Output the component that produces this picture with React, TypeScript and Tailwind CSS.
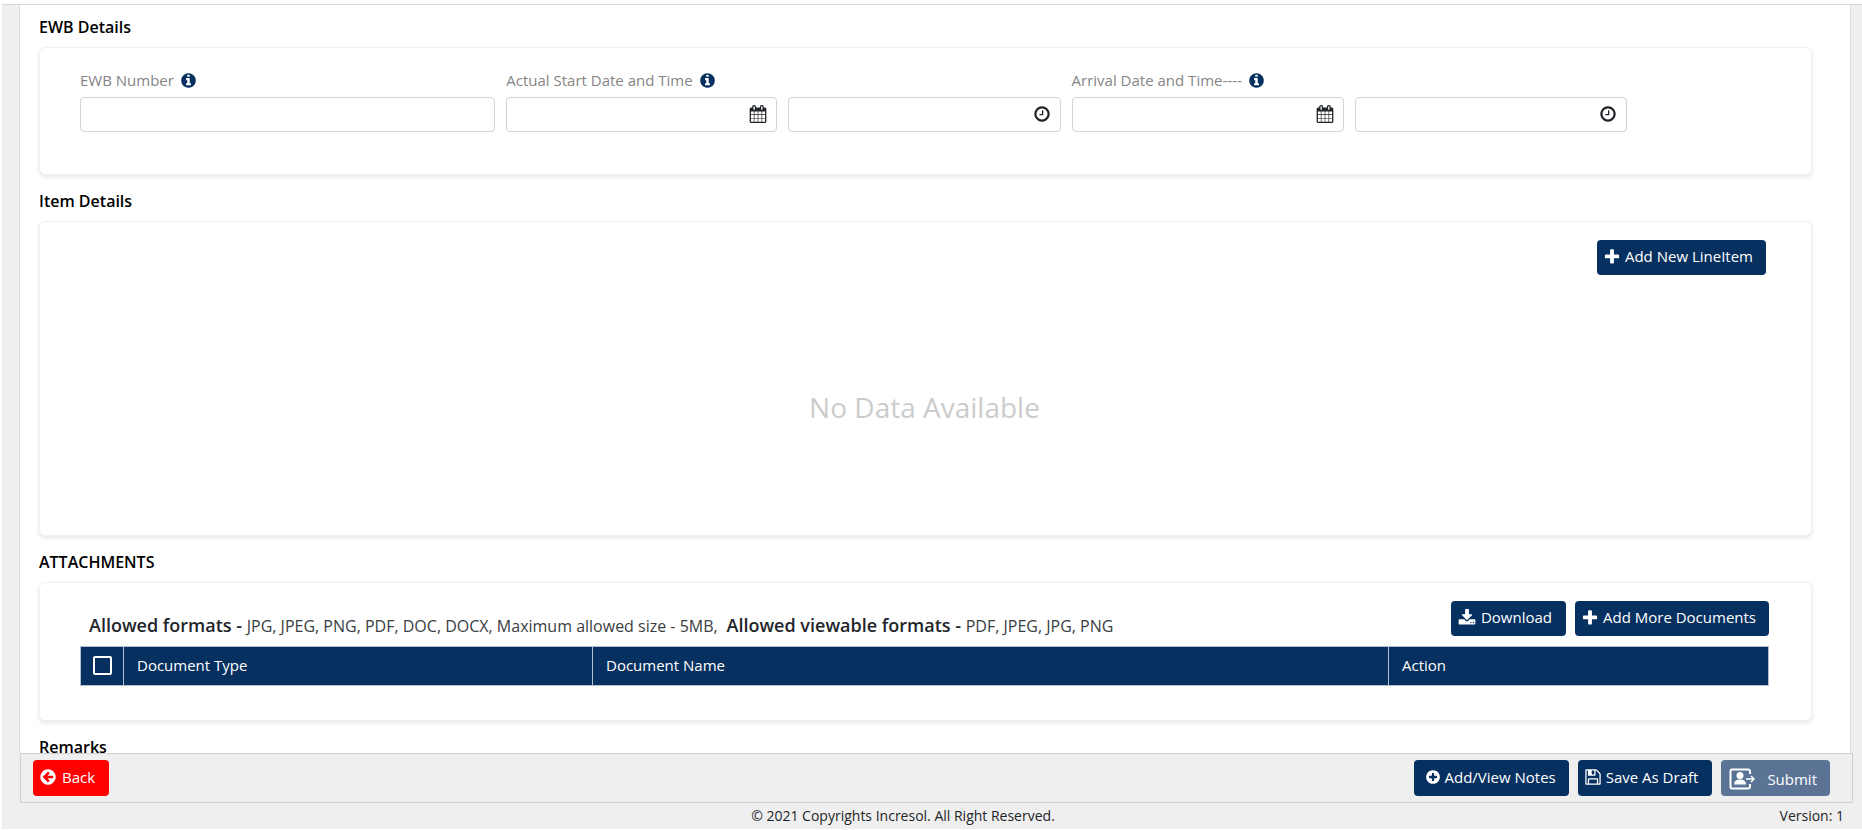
import type { ReactNode } from "react";

const DISC =
  "M1664 896q0 209-103 385.5t-279.5 279.5-385.5 103-385.5-103-279.5-279.5-103-385.5 103-385.5 279.5-279.5 385.5-103 385.5 103 279.5 279.5 103 385.5z";

const ICONS = {
  plus: "M1600 736v192q0 40-28 68t-68 28h-416v416q0 40-28 68t-68 28h-192q-40 0-68-28t-28-68v-416h-416q-40 0-68-28t-28-68v-192q0-40 28-68t68-28h416v-416q0-40 28-68t68-28h192q40 0 68 28t28 68v416h416q40 0 68 28t28 68z",
  info:
    "M1152 1376v-160q0-14-9-23t-23-9h-96v-512q0-14-9-23t-23-9h-320q-14 0-23 9t-9 23v160q0 14 9 23t23 9h96v320h-96q-14 0-23 9t-9 23v160q0 14 9 23t23 9h448q14 0 23-9t9-23zm-128-896v-160q0-14-9-23t-23-9h-192q-14 0-23 9t-9 23v160q0 14 9 23t23 9h192q14 0 23-9t9-23z" +
    DISC,
  calendar:
    "M192 1664h288v-288h-288v288zm352 0h320v-288h-320v288zm-352-352h288v-320h-288v320zm352 0h320v-320h-320v320zm-352-384h288v-288h-288v288zm736 736h320v-288h-320v288zm-384-736h320v-288h-320v288zm768 736h288v-288h-288v288zm-384-352h320v-320h-320v320zm-352-864v-288q0-13-9.5-22.5t-22.5-9.5h-64q-13 0-22.5 9.5t-9.5 22.5v288q0 13 9.5 22.5t22.5 9.5h64q13 0 22.5-9.5t9.5-22.5zm736 864h288v-320h-288v320zm-384-384h320v-288h-320v288zm384 0h288v-288h-288v288zm32-480v-288q0-13-9.5-22.5t-22.5-9.5h-64q-13 0-22.5 9.5t-9.5 22.5v288q0 13 9.5 22.5t22.5 9.5h64q13 0 22.5-9.5t9.5-22.5zm384-64v1280q0 52-38 90t-90 38h-1408q-52 0-90-38t-38-90v-1280q0-52 38-90t90-38h128v-96q0-66 47-113t113-47h64q66 0 113 47t47 113v96h384v-96q0-66 47-113t113-47h64q66 0 113 47t47 113v96h128q52 0 90 38t38 90z",
  clock:
    "M1024 544v448q0 14-9 23t-23 9h-320q-14 0-23-9t-9-23v-64q0-14 9-23t23-9h224v-352q0-14 9-23t23-9h64q14 0 23 9t9 23zm416 352q0-148-73-273t-198-198-273-73-273 73-198 198-73 273 73 273 198 198 273 73 273-73 198-198 73-273z" +
    DISC,
  download:
    "M1344 1344q0-26-19-45t-45-19-45 19-19 45 19 45 45 19 45-19 19-45zm256 0q0-26-19-45t-45-19-45 19-19 45 19 45 45 19 45-19 19-45zm128-224v320q0 40-28 68t-68 28h-1472q-40 0-68-28t-28-68v-320q0-40 28-68t68-28h465l135 136q58 56 136 56t136-56l136-136h464q40 0 68 28t28 68zm-325-569q17 41-14 70l-448 448q-18 19-45 19t-45-19l-448-448q-31-29-14-70 17-39 59-39h256v-448q0-26 19-45t45-19h256q26 0 45 19t19 45v448h256q42 0 59 39z",
  save: "M512 1536h768v-384h-768v384zm896 0h128v-896q0-14-10-38.5t-20-34.5l-281-281q-10-10-34-20t-39-10v416q0 40-28 68t-68 28h-576q-40 0-68-28t-28-68v-416h-128v1280h128v-416q0-40 28-68t68-28h832q40 0 68 28t28 68v416zm-384-928v-320q0-13-9.5-22.5t-22.5-9.5h-192q-13 0-22.5 9.5t-9.5 22.5v320q0 13 9.5 22.5t22.5 9.5h192q13 0 22.5-9.5t9.5-22.5zm640 32v928q0 40-28 68t-68 28h-1344q-40 0-68-28t-28-68v-1344q0-40 28-68t68-28h928q40 0 88 20t76 48l280 280q28 28 48 76t20 88z",
  plusCircle:
    "M1344 960v-128q0-26-19-45t-45-19h-256v-256q0-26-19-45t-45-19h-128q-26 0-45 19t-19 45v256h-256q-26 0-45 19t-19 45v128q0 26 19 45t45 19h256v256q0 26 19 45t45 19h128q26 0 45-19t19-45v-256h256q26 0 45-19t19-45z" +
    DISC,
  back:
    "M1408 960v-128q0-26-19-45t-45-19h-502l189-189q19-19 19-45t-19-45l-91-91q-18-18-45-18t-45 18l-362 362-91 91q-18 18-18 45t18 45l91 91 362 362q18 18 45 18t45-18l91-91q18-18 18-45t-18-45l-189-189h502q26 0 45-19t19-45z" +
    DISC,
};

function Icon({ name, className }: { name: keyof typeof ICONS; className: string }) {
  return (
    <svg viewBox="0 0 1792 1792" className={className} fill="currentColor" fillRule="evenodd" aria-hidden="true">
      <path d={ICONS[name]} />
    </svg>
  );
}

function SubmitIcon() {
  return (
    <svg viewBox="0 0 26 22" className="h-[22px] w-[26px] shrink-0" fill="none" aria-hidden="true">
      <path d="M21 6V3.500Q21 1.500 19 1.500H3Q1.500 1.500 1.500 3V19Q1.500 20.500 3 20.500H19Q21 20.500 21 18.500V16" stroke="currentColor" strokeWidth="2" />
      <circle cx="11" cy="7.500" r="3.500" fill="currentColor" />
      <path d="M5 16.500Q5 11.500 11 11.500Q17 11.500 17 16.500Z" fill="currentColor" />
      <path d="M17 11H24M22 8L25 11L22 14" stroke="currentColor" strokeWidth="1.500" />
    </svg>
  );
}

function Section({ title, className, children }: { title: string; className: string; children: ReactNode }) {
  return (
    <section>
      <h2 className="flex h-[46px] items-center pt-[6px] text-base font-semibold text-black">{title}</h2>
      <div className={"rounded-md border border-[#f0f0f0] bg-white pl-10 pr-[42px] shadow-[0_2px_4px_rgba(0,0,0,0.1)] " + className}>
        {children}
      </div>
    </section>
  );
}

function FieldLabel({ htmlFor, children }: { htmlFor: string; children: ReactNode }) {
  return (
    <label htmlFor={htmlFor} className="flex h-[22px] items-center gap-[6px] whitespace-nowrap text-[15px] text-[#858585]">
      {children}
      <Icon name="info" className="h-[17px] w-[17px] text-[#06305f]" />
    </label>
  );
}

function IconInput({ id, label, icon }: { id: string; label?: string; icon: "calendar" | "clock" }) {
  return (
    <div className="relative">
      <input
        id={id}
        type="text"
        aria-label={label}
        className="block h-[35px] w-full rounded border border-[#ced4da] bg-white pl-3 pr-10 text-[15px] outline-none"
      />
      <Icon name={icon} className="absolute right-[10px] top-2 h-[18px] w-[18px] text-[#212529]" />
    </div>
  );
}

const BUTTON = "flex items-center justify-center whitespace-nowrap rounded text-[15px] text-white ";

export default function App() {
  return (
    <div className="flex h-screen flex-col bg-white pb-px pl-[2px] font-['Open_Sans',sans-serif] text-[#212529]">
      <div className="mt-1 flex min-h-0 flex-1 flex-col border-t border-[#d5d7db] bg-[#efefef]">
        <main className="ml-[17px] mr-[11px] min-h-0 flex-1 overflow-hidden border-x border-[#dcdee2] bg-white pl-[19px] pr-[38px]">
          <div className="-mt-1">
            <Section title="EWB Details" className="h-[128px] pt-[21px]">
              <div className="grid grid-cols-[415fr_271fr_272fr_272fr_272fr_131fr] gap-x-[11px] gap-y-[6px]">
                <FieldLabel htmlFor="ewb-number">EWB Number</FieldLabel>
                <div className="col-span-2">
                  <FieldLabel htmlFor="start-date">Actual Start Date and Time</FieldLabel>
                </div>
                <div className="col-span-3">
                  <FieldLabel htmlFor="arrival-date">Arrival Date and Time----</FieldLabel>
                </div>
                <input
                  id="ewb-number"
                  type="text"
                  className="block h-[35px] w-full rounded border border-[#ced4da] bg-white px-3 text-[15px] outline-none"
                />
                <IconInput id="start-date" icon="calendar" />
                <IconInput id="start-time" label="Actual start time" icon="clock" />
                <IconInput id="arrival-date" icon="calendar" />
                <IconInput id="arrival-time" label="Arrival time" icon="clock" />
              </div>
            </Section>

            <Section title="Item Details" className="flex h-[315px] flex-col pb-[110px] pt-[18px]">
              <button type="button" className={BUTTON + "mr-[3px] h-[35px] gap-1 self-end bg-[#06305f] pb-[2px] pl-[6px] pr-[13px]"}>
                <Icon name="plus" className="h-[18px] w-[18px]" />
                Add New LineItem
              </button>
              <p className="flex flex-1 items-end justify-center text-[28px] leading-9 text-[#cccccc]">No Data Available</p>
            </Section>

            <Section title="ATTACHMENTS" className="h-[139px] pt-[18px]">
              <div className="flex h-[45px] items-start justify-between">
                <p className="whitespace-nowrap pl-[9px] pt-3 text-base leading-6 text-[#3a3e42]">
                  <span className="text-lg font-semibold leading-6 text-[#212529]">Allowed formats - </span>JPG, JPEG, PNG, PDF, DOC, DOCX,
                  Maximum allowed size - 5MB,{" "}
                  <span className="text-lg font-semibold leading-6 text-[#212529]">&nbsp;Allowed viewable formats - </span>PDF, JPEG, JPG,
                  PNG
                </p>
                <div className="flex gap-[9px]">
                  <button type="button" className={BUTTON + "h-[35px] gap-[5px] bg-[#06305f] pb-[2px] pl-[7px] pr-[14px]"}>
                    <Icon name="download" className="h-[18px] w-[18px]" />
                    Download
                  </button>
                  <button type="button" className={BUTTON + "h-[35px] gap-1 bg-[#06305f] pb-[2px] pl-[6px] pr-[13px]"}>
                    <Icon name="plus" className="h-[18px] w-[18px]" />
                    Add More Documents
                  </button>
                </div>
              </div>
              <table className="w-full table-fixed border-collapse text-left text-[15px] text-white">
                <colgroup>
                  <col className="w-[43px]" />
                  <col className="w-[469px]" />
                  <col />
                  <col className="w-[380px]" />
                </colgroup>
                <thead>
                  <tr className="h-[39px] bg-[#06305f]">
                    <th className="border border-[#b4c0cf] p-0 pb-[2px] font-normal">
                      <input
                        type="checkbox"
                        aria-label="Select all documents"
                        className="mx-auto block h-[19px] w-[19px] appearance-none rounded-[2px] border-2 border-white"
                      />
                    </th>
                    <th className="border border-[#b4c0cf] px-[13px] pb-[2px] pt-0 font-normal">Document Type</th>
                    <th className="border border-[#b4c0cf] px-[13px] pb-[2px] pt-0 font-normal">Document Name</th>
                    <th className="border border-[#b4c0cf] px-[13px] pb-[2px] pt-0 font-normal">Action</th>
                  </tr>
                </thead>
              </table>
            </Section>

            <Section title="Remarks" className="h-[120px]">
              {null}
            </Section>
          </div>
        </main>

        <div className="ml-[18px] mr-[9px] flex h-[50px] shrink-0 items-center justify-between border border-[#cfcfcf] pl-3 pr-[22px]">
          <button type="button" className={BUTTON + "h-9 gap-[5px] bg-[#ff0000] pb-[2px] pl-[6px] pr-[14px]"}>
            <Icon name="back" className="h-[18px] w-[18px]" />
            Back
          </button>
          <div className="flex gap-[9px]">
            <button type="button" className={BUTTON + "h-9 gap-[3px] bg-[#06305f] pb-[2px] pl-[11px] pr-[13px]"}>
              <Icon name="plusCircle" className="h-4 w-4" />
              Add/View Notes
            </button>
            <button type="button" className={BUTTON + "h-9 gap-1 bg-[#06305f] pb-[2px] pl-[6px] pr-[14px]"}>
              <Icon name="save" className="h-[18px] w-[18px]" />
              Save As Draft
            </button>
            <button type="button" disabled className={BUTTON + "h-9 gap-3 bg-[#5b7496] pl-2 pr-[13px] pt-[2px]"}>
              <SubmitIcon />
              Submit
            </button>
          </div>
        </div>

        <footer className="grid h-[26px] shrink-0 grid-cols-[1fr_auto_1fr] items-center pl-2 pr-[18px] text-sm">
          <span />
          <span className="pr-[48px]">© 2021 Copyrights Incresol. All Right Reserved.</span>
          <span className="text-right font-medium">Version: 1</span>
        </footer>
      </div>
    </div>
  );
}
